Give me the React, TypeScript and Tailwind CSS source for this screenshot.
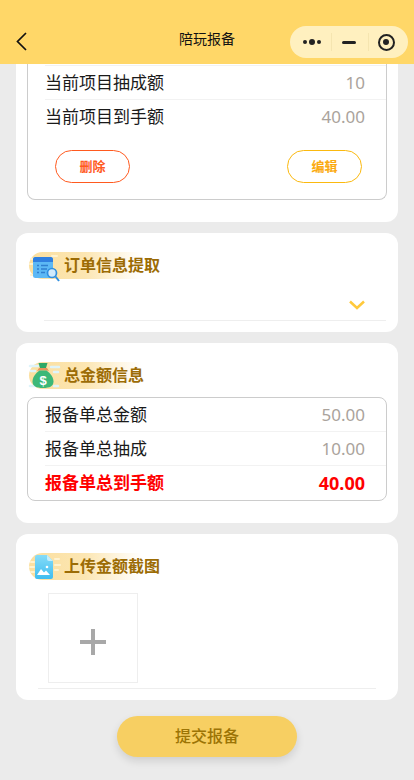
const font = { fontFamily: '"Liberation Sans", "Noto Sans CJK SC", sans-serif' }

const Row = ({ label, value, last, strong }: { label: string; value: string; last?: boolean; strong?: boolean }) => (
  <div
    className={`ml-[17px] flex h-[34px] items-center justify-between pr-[21px] pt-[2px] ${last ? '' : 'border-b border-[#f2f2f2]'} ${
      strong ? 'font-bold text-[#ff0000]' : ''
    }`}
  >
    <span className={`text-[17px] ${strong ? '' : 'text-[#1a1a1a]'}`}>{label}</span>
    <span className={`mb-[2px] font-['Noto_Sans'] ${strong ? 'text-[18px]' : 'text-[17px] text-[#aaa39c]'}`}>{value}</span>
  </div>
)

const Title = ({ text, icon }: { text: string; icon: React.ReactNode }) => (
  <div className="relative flex h-[27px] w-[112px] items-center rounded-l-full bg-gradient-to-r from-[#fbdf9f] via-[#fce6b2] to-white pl-[35px]">
    <div className="absolute left-[3px] top-[-1px]">{icon}</div>
    <span className="whitespace-nowrap text-[16px] font-bold text-[#9c6c05]">{text}</span>
  </div>
)

const SearchIcon = () => (
  <svg className="block overflow-visible" width="28" height="31" viewBox="0 0 28 31" fill="none">
    <path d="M-1 8h4M-2 13h3M-1 24h5M20 5h5" stroke="#fff3d0" strokeWidth="2" strokeLinecap="round" />
    <rect x="1" y="6" width="20" height="21" rx="2.500" fill="#5cb8f5" />
    <path d="M1 11V8.500A2.500 2.500 0 0 1 3.500 6h15A2.500 2.500 0 0 1 21 8.500V11z" fill="#2f7fe0" />
    <path d="M5 14.500h2M9 14.500h7M5 18h2M9 18h6M5 21.500h2M9 21.500h4" stroke="#2f7fd0" strokeWidth="1.300" />
    <circle cx="20" cy="22" r="4.500" fill="#cfeafc" stroke="#2f8fe0" strokeWidth="1.700" />
    <path d="M23.500 25.500 27 30" stroke="#2f8fe0" strokeWidth="2" />
  </svg>
)

const MoneyIcon = () => (
  <svg className="block overflow-visible" width="28" height="30" viewBox="0 0 28 30" fill="none">
    <path d="M-2 5h8M-1 10h4M-2 25h5M19 6h8M22 11h4M22 25h4" stroke="#dff4fa" strokeWidth="2.500" strokeLinecap="round" />
    <path d="M6.500 2h9l-1.500 5H8z" fill="#2fa866" />
    <path d="M7 7h8l2 3-2-.500H7L5 10z" fill="#e8945a" />
    <path d="M7.500 9.500h7c4.500 3 7 7.500 7 11 0 4.500-3.500 6.500-10.500 6.500S.5 25 .5 20.500c0-3.500 2.500-8 7-11z" fill="#3cb878" />
    <text x="11" y="24" textAnchor="middle" fontSize="13" fontWeight="700" fill="#ffffff" fontFamily="Liberation Sans">$</text>
  </svg>
)

const ImageIcon = () => (
  <svg className="block overflow-visible" width="28" height="30" viewBox="0 0 28 30" fill="none">
    <defs>
      <linearGradient id="imgGrad" x1="0" y1="0" x2="0" y2="1">
        <stop offset="0" stopColor="#86dcf8" />
        <stop offset="1" stopColor="#3fbdf0" />
      </linearGradient>
    </defs>
    <path d="M-1 10h3M-2 15h4M-1 20h3M23 7h4M23 13h5M23 18h3" stroke="#fff3d0" strokeWidth="2" strokeLinecap="round" />
    <path d="M5 3h10l6 6v16a2 2 0 0 1-2 2H5a2 2 0 0 1-2-2V5a2 2 0 0 1 2-2z" fill="url(#imgGrad)" />
    <path d="M15 3v4a2 2 0 0 0 2 2h4z" fill="#c4eefc" />
    <path d="M5 23l4-6 3 3.500 2-2 4 4.500z" fill="#ffffff" />
    <circle cx="15" cy="15" r="1.300" fill="#ffffff" />
  </svg>
)

export default function App() {
  return (
    <div className="flex h-[780px] w-[414px] flex-col overflow-hidden bg-[#ebebeb]" style={font}>
      {/* Header */}
      <div className="relative flex h-[64px] shrink-0 items-end justify-center bg-[#ffd768] pb-[15px]">
        <svg className="absolute left-[14px] top-[31px]" width="14" height="20" viewBox="0 0 14 20" fill="none">
          <path d="M12 2 3.500 10.500 12 19" stroke="#111111" strokeWidth="1.700" />
        </svg>
        <span className="text-[14px] leading-[20px] text-[#111111]">陪玩报备</span>
        <div className="absolute left-[290px] top-[26px] flex h-[32px] w-[118px] items-center rounded-full bg-[#fff0bf]">
          <div className="flex w-[41px] items-center gap-[2px] pl-[13px]">
            <span className="h-[4px] w-[4px] rounded-full bg-[#222222]" />
            <span className="h-[6px] w-[6px] rounded-full bg-[#222222]" />
            <span className="h-[4px] w-[4px] rounded-full bg-[#222222]" />
          </div>
          <div className="h-[18px] w-px bg-[#f5e5b0]" />
          <div className="flex w-[36px] justify-center pr-[2px]">
            <span className="h-[3px] w-[14px] rounded-sm bg-[#222222]" />
          </div>
          <div className="h-[18px] w-px bg-[#f5e5b0]" />
          <div className="flex flex-1 justify-center pr-[5px]">
            <span className="flex h-[17px] w-[17px] items-center justify-center rounded-full border-2 border-[#222222]">
              <span className="h-[6px] w-[6px] rounded-full bg-[#222222]" />
            </span>
          </div>
        </div>
      </div>

      <div className="flex flex-col gap-[11px]">
        {/* Project card, scrolled under the header */}
        <div className="mx-[16px] h-[158px] rounded-b-[12px] bg-white px-[11px]">
          <div className="h-[136px] rounded-b-[8px] border-x border-b border-[#cccccc]">
            <div className="h-[1px]" />
            <div className="ml-[17px] h-px bg-[#f2f2f2]" />
            <Row label="当前项目抽成额" value="10" />
            <Row label="当前项目到手额" value="40.00" last />
            <div className="flex justify-between pl-[27px] pr-[24px] pt-[16px]">
              <button type="button" className="h-[33px] w-[75px] rounded-full border border-[#ff5a1f] text-[13px] font-bold text-[#ff5a1f]">
                删除
              </button>
              <button type="button" className="h-[33px] w-[75px] rounded-full border border-[#fbb90f] text-[13px] font-bold text-[#fbaa0f]">
                编辑
              </button>
            </div>
          </div>
        </div>

        {/* Order info */}
        <div className="mx-[16px] h-[99px] rounded-[12px] bg-white pl-[13px] pt-[19px]">
          <Title text="订单信息提取" icon={<SearchIcon />} />
          <div className="ml-[15px] mr-[12px] mt-[13px] flex h-[29px] justify-end border-b border-[#eeeeee] pr-[21px] pt-[8px]">
            <svg width="16" height="10" viewBox="0 0 16 10" fill="none">
              <path d="M1 1.500 8 8l7-6.500" stroke="#ffc93c" strokeWidth="2.500" />
            </svg>
          </div>
        </div>

        {/* Totals */}
        <div className="mx-[16px] h-[180px] rounded-[12px] bg-white px-[11px] pt-[19px]">
          <div className="ml-[2px]">
            <Title text="总金额信息" icon={<MoneyIcon />} />
          </div>
          <div className="mt-[8px] h-[104px] rounded-[8px] border border-[#cccccc]">
            <Row label="报备单总金额" value="50.00" />
            <Row label="报备单总抽成" value="10.00" />
            <Row label="报备单总到手额" value="40.00" last strong />
          </div>
        </div>

        {/* Upload */}
        <div className="mx-[16px] h-[166px] rounded-[12px] bg-white pl-[13px] pt-[19px]">
          <Title text="上传金额截图" icon={<ImageIcon />} />
          <div className="ml-[19px] mt-[13px] flex h-[90px] w-[90px] items-center justify-center border border-[#eeeeee]">
            <svg className="mt-[8px]" width="26" height="26" viewBox="0 0 26 26">
              <path d="M11 0h4v11h11v4H15v11h-4V15H0v-4h11z" fill="#a8a8a8" />
            </svg>
          </div>
          <div className="ml-[9px] mr-[22px] mt-[5px] h-px bg-[#eeeeee]" />
        </div>

        {/* Submit */}
        <button
          type="button"
          className="mx-auto mt-[5px] h-[41px] w-[180px] rounded-full bg-[#f7cf62] text-[16px] font-medium text-[#9c7405] shadow-[0_4px_8px_rgba(0,0,0,0.12)]"
        >
          提交报备
        </button>
      </div>
    </div>
  )
}
